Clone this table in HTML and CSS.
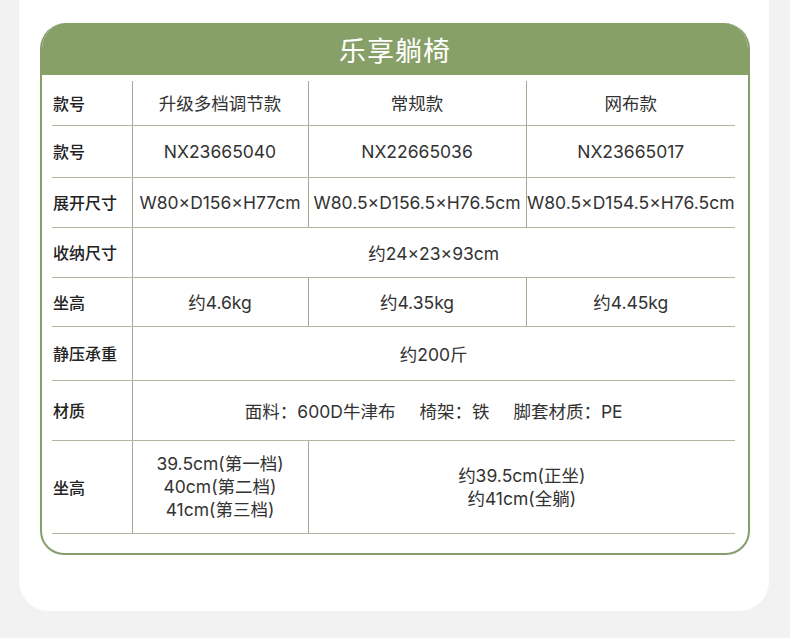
FILE: index.html
```html
<!DOCTYPE html>
<html lang="zh-CN">
<head>
<meta charset="utf-8">
<link rel="stylesheet" href="styles.css">
</head>
<body>
<div class="card">
  <div class="box">
    <div class="box-title">乐享躺椅</div>
    <div class="box-body">
      <table class="spec">
        <colgroup>
          <col class="c1"><col class="c2"><col class="c3"><col class="c4">
        </colgroup>
        <tr class="r1">
          <th>款号</th><td>升级多档调节款</td><td>常规款</td><td>网布款</td>
        </tr>
        <tr class="r2">
          <th>款号</th><td>NX23665040</td><td>NX22665036</td><td>NX23665017</td>
        </tr>
        <tr class="r3">
          <th>展开尺寸</th><td>W80×D156×H77cm</td><td>W80.5×D156.5×H76.5cm</td><td>W80.5×D154.5×H76.5cm</td>
        </tr>
        <tr class="r4">
          <th>收纳尺寸</th><td colspan="3">约24×23×93cm</td>
        </tr>
        <tr class="r5">
          <th>坐高</th><td>约4.6kg</td><td>约4.35kg</td><td>约4.45kg</td>
        </tr>
        <tr class="r6">
          <th>静压承重</th><td colspan="3">约200斤</td>
        </tr>
        <tr class="r7">
          <th>材质</th><td colspan="3">面料：600D牛津布<span class="gap"></span>椅架：铁<span class="gap"></span>脚套材质：PE</td>
        </tr>
        <tr class="r8">
          <th>坐高</th>
          <td class="multi">39.5cm(第一档)<br>40cm(第二档)<br>41cm(第三档)</td>
          <td colspan="2" class="multi">约39.5cm(正坐)<br>约41cm(全躺)</td>
        </tr>
      </table>
    </div>
  </div>
</div>
</body>
</html>
```

FILE: styles.css
```css
html, body {
  margin: 0;
  padding: 0;
}
body {
  background: #f2f2f2;
  font-family: "Noto Sans CJK SC", "Noto Sans", sans-serif;
  color: #333;
  width: 790px;
  height: 638px;
  overflow: hidden;
}
.card {
  margin-left: 19px;
  width: 750px;
  background: #fff;
  border-radius: 0 0 30px 30px;
  padding: 23px 0 56px 21px;
  box-sizing: border-box;
}
.box {
  width: 710px;
  box-sizing: border-box;
  border: 2px solid #879d6c;
  border-top: none;
  border-radius: 26px 26px 24px 24px;
  overflow: hidden;
  background: #fff;
}
.box-title {
  height: 52px;
  background: #87a068;
  color: #fff;
  font-size: 27px;
  font-weight: 400;
  display: flex;
  align-items: center;
  justify-content: center;
  letter-spacing: 1px;
  margin: 0 -2px;
}
.box-body {
  padding: 6px 0 19px 10px;
}
.spec {
  border-collapse: collapse;
  table-layout: fixed;
  width: 683px;
}
.c1 { width: 80px; }
.c2 { width: 176px; }
.c3 { width: 218px; }
.c4 { width: 209px; }
.spec th, .spec td {
  padding: 0;
  border-bottom: 1px solid #b3b6a2;
  white-space: nowrap;
  vertical-align: middle;
}
.spec th {
  text-align: left;
  font-size: 16px;
  font-weight: 500;
  color: #222;
  padding-left: 1px;
}
.spec td {
  text-align: center;
  font-family: "Inter", "Noto Sans CJK SC", sans-serif;
  font-size: 17.5px;
  color: #333;
  border-left: 1px solid #a3a890;
  overflow: visible;
}
.spec td.multi {
  line-height: 23px;
}
.r1 { height: 44px; }
.r2 { height: 52px; }
.r3 { height: 50px; }
.r4 { height: 50px; }
.r5 { height: 49px; }
.r6 { height: 54px; }
.r7 { height: 60px; }
.r8 { height: 93px; }
.gap {
  display: inline-block;
  width: 24px;
}
```
